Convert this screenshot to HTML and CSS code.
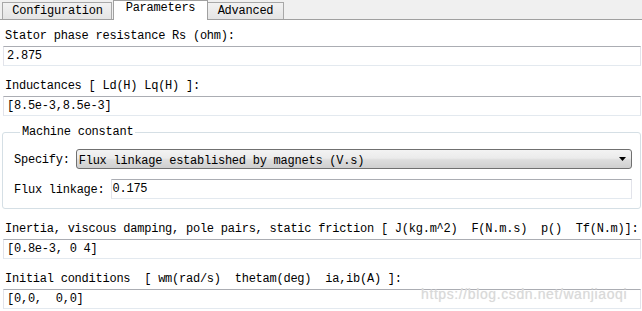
FILE: index.html
```html
<!DOCTYPE html>
<html>
<head>
<meta charset="utf-8">
<link rel="stylesheet" href="styles.css">
</head>
<body>
<div class="dlg">
  <div class="tabs">
    <div class="tab tab-config">Configuration</div>
    <div class="tab tab-params active">Parameters</div>
    <div class="tab tab-adv">Advanced</div>
  </div>
  <div class="pane">
    <div class="field">
      <div class="lbl">Stator phase resistance Rs (ohm):</div>
      <div class="inp">2.875</div>
    </div>
    <div class="field">
      <div class="lbl">Inductances [ Ld(H) Lq(H) ]:</div>
      <div class="inp">[8.5e-3,8.5e-3]</div>
    </div>
    <fieldset class="group">
      <legend class="legend">Machine constant</legend>
      <div class="row">
        <span class="rl">Specify:</span>
        <div class="select">
          <span class="sel-text">Flux linkage established by magnets (V.s)</span>
          <svg class="arrow" width="7" height="4" viewBox="0 0 7 4"><path d="M0 0H7L3.5 4Z" fill="#000"/></svg>
        </div>
      </div>
      <div class="row">
        <span class="rl">Flux linkage:</span>
        <div class="inp grow">0.175</div>
      </div>
    </fieldset>
    <div class="field">
      <div class="lbl">Inertia, viscous damping, pole pairs, static friction [ J(kg.m^2)&nbsp; F(N.m.s)&nbsp; p()&nbsp; Tf(N.m)]:</div>
      <div class="inp">[0.8e-3, 0 4]</div>
    </div>
    <div class="field">
      <div class="lbl">Initial conditions&nbsp; [ wm(rad/s)&nbsp; thetam(deg)&nbsp; ia,ib(A) ]:</div>
      <div class="inp">[0,0,&nbsp; 0,0]</div>
    </div>
  </div>
  <div class="watermark">https://blog.csdn.net/wanjiaoqi</div>
</div>
</body>
</html>
```
FILE: styles.css
```css
* { box-sizing: border-box; }
html, body { margin: 0; padding: 0; background: #fff; }
body {
  width: 642px;
  height: 311px;
  overflow: hidden;
  font-family: "Liberation Mono", "DejaVu Sans Mono", monospace;
  font-size: 12px;
  letter-spacing: -0.24px;
  color: #000;
}
.dlg { position: relative; width: 642px; height: 311px; }

.tabs {
  display: flex;
  align-items: flex-end;
  height: 20px;
  background: #f0f0f0;
  border-bottom: 1px solid #a0a0a0;
  padding-left: 2px;
}
.tab {
  height: 17px;
  line-height: 16px;
  border: 1px solid #a8a8a8;
  border-bottom: none;
  background: linear-gradient(#f2f2f2, #e4e4e4);
  text-align: center;
}
.tab-config { width: 110px; padding-left: 1px; }
.tab-params { width: 95px; }
.tab-adv { width: 77px; margin-left: -1px; }
.tab.active {
  height: 20px;
  line-height: 15px;
  background: #fff;
  margin-bottom: -1px;
  margin-left: 1px;
  border-color: #a0a0a0;
  position: relative;
  z-index: 1;
}

.pane {
  padding: 6px 1px 0 3px;
}
.field { margin-bottom: 10px; }
.lbl {
  height: 20px;
  line-height: 20px;
  padding-left: 2px;
  white-space: nowrap;
}
.inp {
  height: 20px;
  line-height: 19px;
  padding-left: 3px;
  border: 1px solid #e2e3ea;
  border-top-color: #abadb3;
  border-bottom-color: #e3e9ef;
  background: #fff;
  white-space: nowrap;
}

.group {
  margin: -1px 0 10px -1px;
  padding: 10px 8px 9px 11px;
  border: 1px solid #d5dfe5;
  border-radius: 3px;
  display: flex;
  flex-direction: column;
  gap: 10px;
  min-width: 0;
}
.legend {
  padding: 0 2px;
  margin-left: 6px;
  line-height: 14px;
}
.row {
  display: flex;
  align-items: center;
  gap: 6px;
  height: 20px;
}
.rl { white-space: nowrap; line-height: 20px; padding-top: 2px; }
.grow { flex: 1; }
.row .inp { padding-left: 1px; }
.select {
  flex: 1;
  height: 20px;
  border: 1px solid #707070;
  border-radius: 3px;
  background: linear-gradient(#f3f3f3 0%, #ebebeb 45%, #dddddd 55%, #cfcfcf 100%);
  display: flex;
  align-items: center;
  justify-content: space-between;
  padding: 3px 5px 0 2px;
}
.sel-text { white-space: nowrap; line-height: 16px; }
.arrow { display: block; margin-top: -3px; }

.watermark {
  position: absolute;
  left: 421px;
  top: 286px;
  font-family: "Liberation Sans", Arial, sans-serif;
  font-size: 14px;
  letter-spacing: 0.6px;
  color: #d9d9d9;
  text-shadow: 0 0 1px #e8e8e8;
  white-space: nowrap;
  pointer-events: none;
}
```
